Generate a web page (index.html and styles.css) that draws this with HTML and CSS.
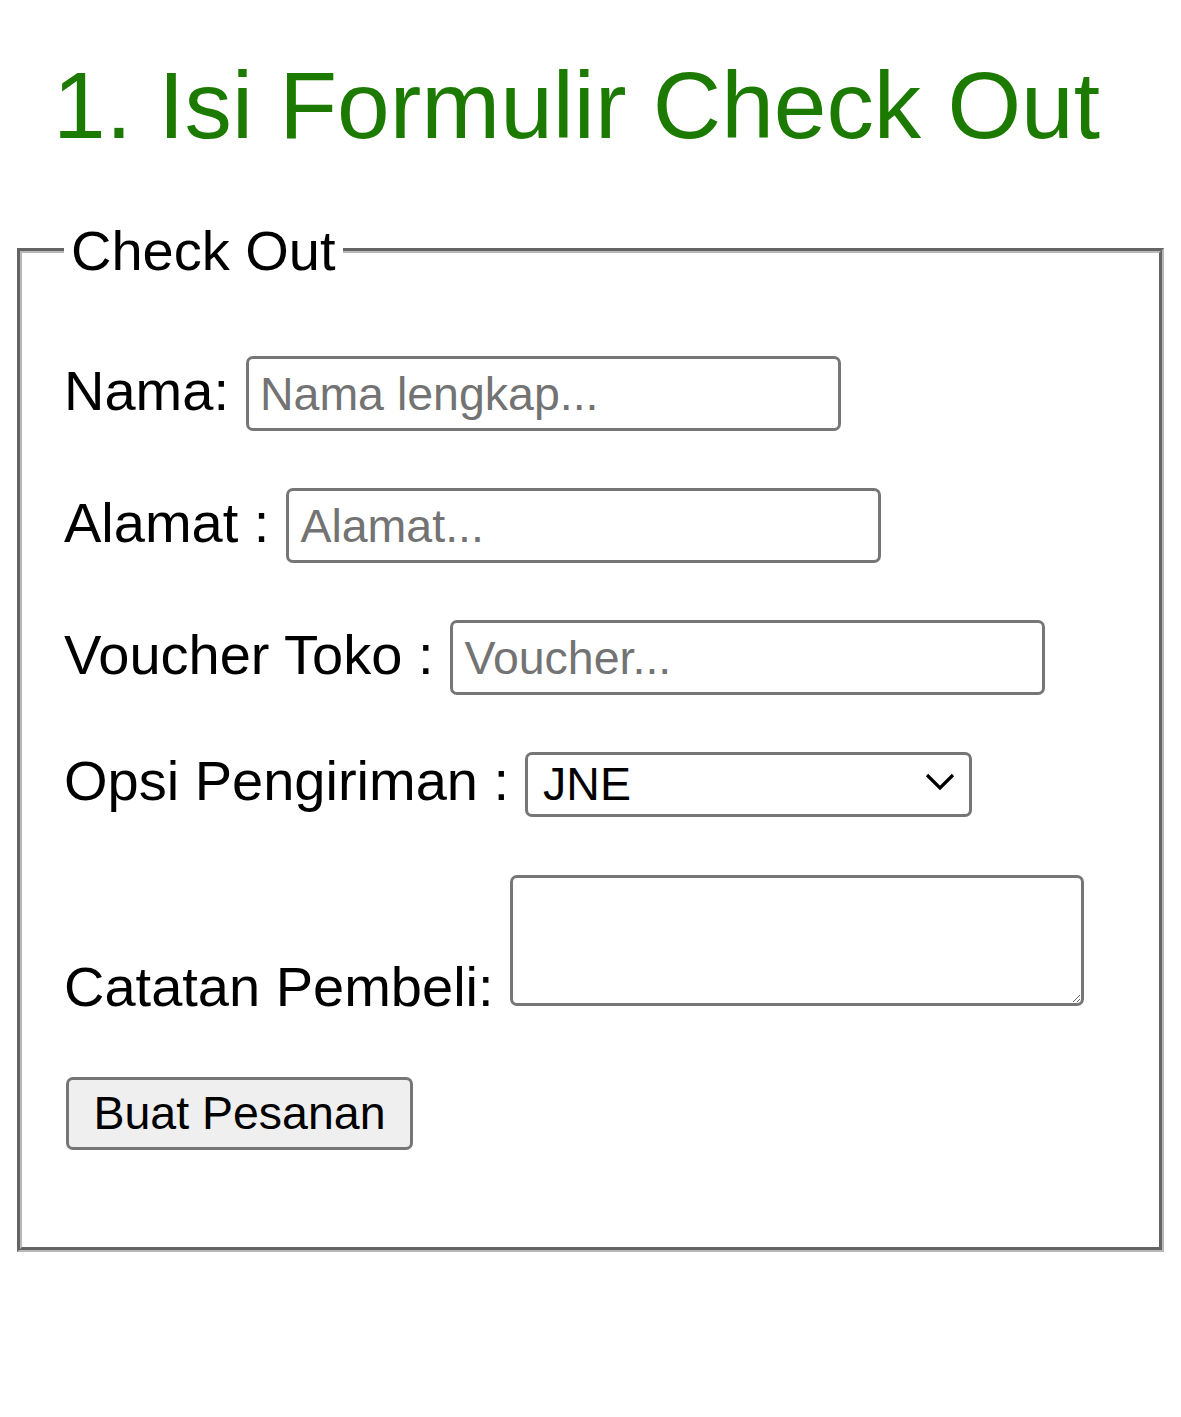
FILE: index.html
```html
<!DOCTYPE html>
<html lang="id">
<head>
<meta charset="utf-8">
<title>Check Out</title>
<link rel="stylesheet" href="styles.css">
</head>
<body>
<h1 class="title">1. Isi Formulir Check Out</h1>
<form class="form">
  <fieldset class="checkout">
    <legend class="legend">Check Out</legend>
    <div class="row row-first">
      <label class="lbl" for="nama">Nama:</label>
      <input class="field" id="nama" type="text" placeholder="Nama lengkap...">
    </div>
    <div class="row">
      <label class="lbl" for="alamat">Alamat :</label>
      <input class="field" id="alamat" type="text" placeholder="Alamat...">
    </div>
    <div class="row">
      <label class="lbl" for="voucher">Voucher Toko :</label>
      <input class="field" id="voucher" type="text" placeholder="Voucher...">
    </div>
    <div class="row row-select">
      <label class="lbl" for="opsi">Opsi Pengiriman :</label>
      <span class="select-wrap">
        <select class="select" id="opsi">
          <option>JNE</option>
          <option>J&amp;T</option>
          <option>SiCepat</option>
        </select>
        <svg class="chev" width="30" height="18" viewBox="0 0 30 18" aria-hidden="true"><polyline points="2,2 15,15 28,2" fill="none" stroke="#000" stroke-width="3.2"/></svg>
      </span>
    </div>
    <div class="row row-end">
      <label class="lbl" for="catatan">Catatan Pembeli:</label>
      <textarea class="notes" id="catatan"></textarea>
    </div>
    <div class="row row-btn">
      <button class="btn" type="button">Buat Pesanan</button>
    </div>
  </fieldset>
</form>
</body>
</html>
```

FILE: styles.css
```css
html, body {
  margin: 0;
  padding: 0;
  background: #ffffff;
}
body {
  font-family: "Liberation Sans", Arial, sans-serif;
  color: #000;
  width: 1181px;
}
.title {
  margin: 51px 0 0 53px;
  font-size: 94.7px;
  font-weight: normal;
  line-height: normal;
  color: #1c7a00;
  white-space: nowrap;
}
.form {
  margin: 0;
}
.checkout {
  box-sizing: border-box;
  margin: 58px 0 0 17px;
  width: 1147px;
  border: 5px groove #b8b8b8;
  padding: 0 42px 97px 42px;
  min-inline-size: 0;
}
.legend {
  padding: 0 7px;
  font-size: 56px;
  line-height: normal;
}
.row {
  display: flex;
  align-items: baseline;
  gap: 17px;
  margin-top: 57px;
  font-size: 56px;
  line-height: normal;
}
.row-first {
  margin-top: 73px;
}
.row-select {
  margin-top: 53px;
}
.row-end {
  margin-top: 58px;
}
.row-btn {
  margin-top: 58px;
}
.row-end {
  align-items: flex-end;
}
.lbl {
  white-space: nowrap;
}
.field {
  box-sizing: border-box;
  width: 595px;
  height: 75px;
  margin: 0;
  padding: 0 11px;
  border: 3px solid #767676;
  border-radius: 7px;
  font-family: "Liberation Sans", Arial, sans-serif;
  font-size: 46.5px;
  color: #000;
  background: #fff;
}
.field::placeholder {
  color: #737373;
}
.select-wrap {
  position: relative;
  display: inline-block;
  margin-left: -1px;
}
.select {
  box-sizing: border-box;
  width: 447px;
  height: 65px;
  margin: 0;
  padding: 0 60px 0 15px;
  border: 3px solid #767676;
  border-radius: 7px;
  font-family: "Liberation Sans", Arial, sans-serif;
  font-size: 46.5px;
  color: #000;
  background: #fff;
  appearance: none;
  -webkit-appearance: none;
}
.chev {
  position: absolute;
  right: 17px;
  top: 25px;
  pointer-events: none;
}
.notes {
  box-sizing: border-box;
  width: 574px;
  height: 131px;
  margin: 0 0 13px -1px;
  border: 3px solid #767676;
  border-radius: 7px;
  font-family: "Liberation Mono", monospace;
  font-size: 46px;
  background: #fff;
}
.btn {
  box-sizing: border-box;
  width: 347px;
  height: 73px;
  margin: 0 0 0 2px;
  padding: 0;
  border: 3px solid #767676;
  border-radius: 7px;
  background: #efefef;
  font-family: "Liberation Sans", Arial, sans-serif;
  font-size: 46.5px;
  color: #000;
  text-align: center;
}
```
